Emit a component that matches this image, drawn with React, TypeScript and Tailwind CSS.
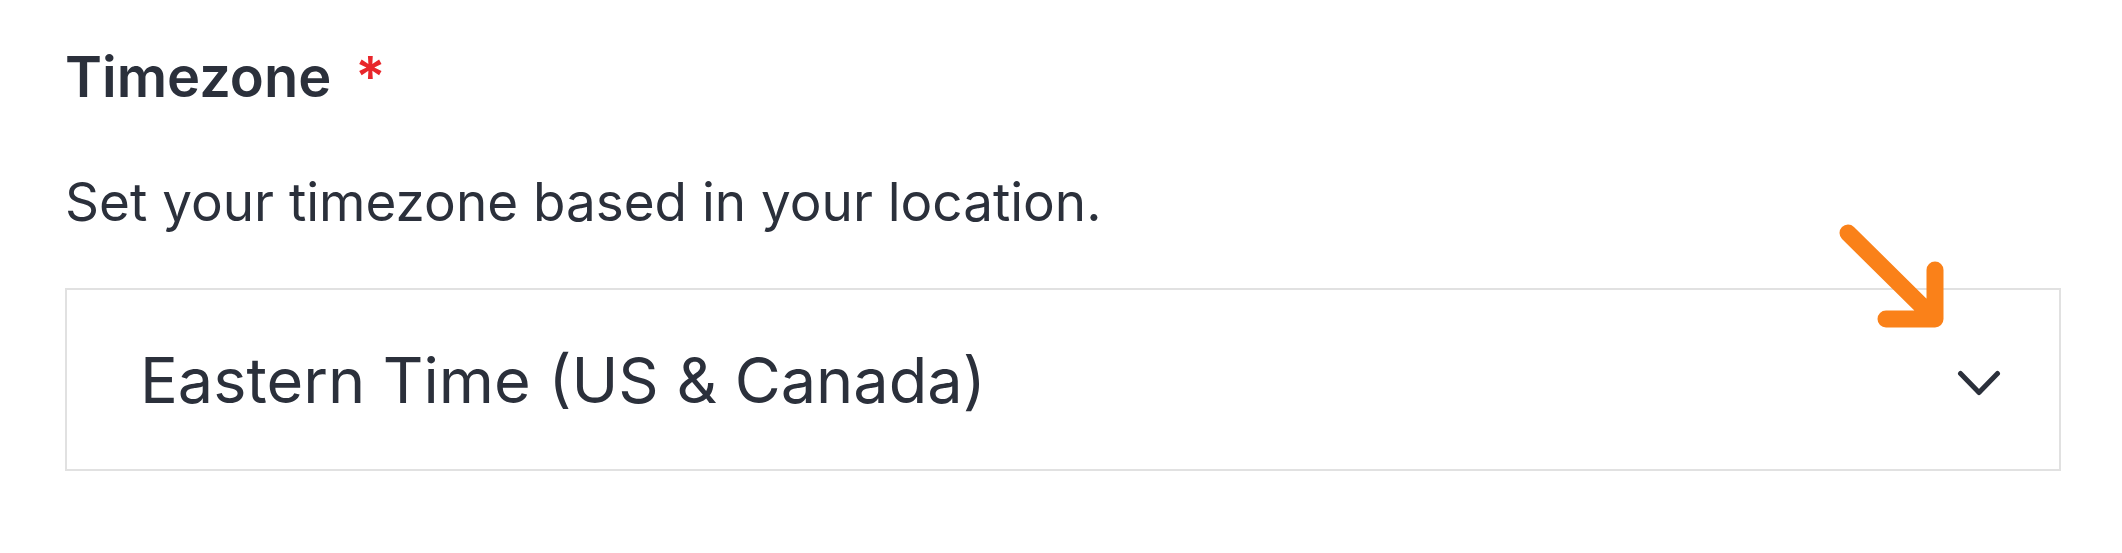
function PointerArrow() {
  return (
    <svg
      className="pointer-events-none absolute left-[1830px] top-[215px]"
      width="130"
      height="125"
      viewBox="0 0 130 125"
      fill="none"
    >
      <path
        d="M18 18 L103 102 M105 55 L105 104 L56 104"
        stroke="#fa8119"
        strokeWidth="17"
        strokeLinecap="round"
        strokeLinejoin="round"
      />
    </svg>
  );
}

function Chevron() {
  return (
    <svg className="mt-[8px] shrink-0" width="44" height="28" viewBox="0 0 44 28" fill="none">
      <polyline
        points="3.5,3.5 22,22.5 40.5,3.5"
        stroke="#2b303b"
        strokeWidth="5"
        strokeLinecap="round"
        strokeLinejoin="round"
      />
    </svg>
  );
}

export default function App() {
  return (
    <div className="relative h-[553px] w-full bg-white pl-[65px] pr-[61px] pt-[43px] font-['Inter',sans-serif] text-[#2b303b]">
      <label className="flex items-start text-[56px] font-semibold leading-[68px]">
        Timezone
        <span className="ml-[24px] text-[#e8262b]">*</span>
      </label>

      <p className="mt-[59px] text-[53px] leading-[64px]">
        Set your timezone based in your location.
      </p>

      <div className="mt-[54px] flex h-[183px] items-center justify-between border-2 border-[#e1e1e1] bg-white pl-[73px] pr-[58px]">
        <span className="text-[63px] leading-[76px]">Eastern Time (US &amp; Canada)</span>
        <Chevron />
      </div>

      <PointerArrow />
    </div>
  );
}
